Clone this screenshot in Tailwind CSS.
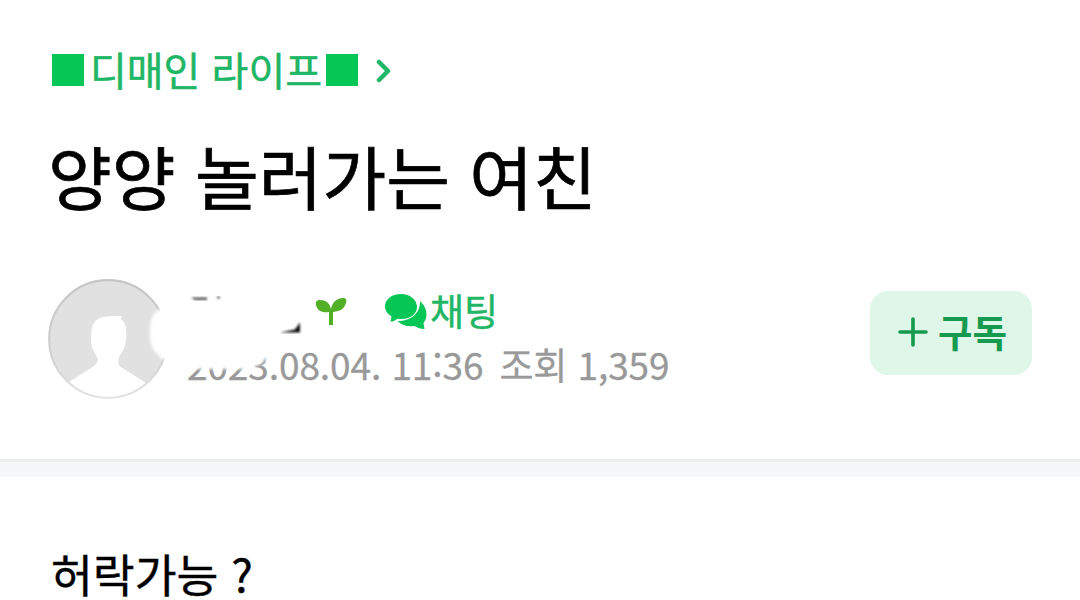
<!DOCTYPE html>
<html lang="ko">
<head>
  <meta charset="UTF-8" />
  <meta name="viewport" content="width=device-width, initial-scale=1.0"/>
  <title>양양 놀러가는 여친</title>
  <script src="https://cdn.jsdelivr.net/npm/@tailwindcss/browser@4"></script>
</head>
<body class="h-[600px] overflow-hidden bg-white font-['Noto_Sans_CJK_KR',sans-serif] text-black">
  <header class="h-[459px] px-12 pt-10">
    <!-- Board link -->
    <a class="flex h-[60px] items-center text-[40px] leading-none text-[#1fb665]">
      <span class="mr-[6px] ml-1 h-8 w-8 bg-[#06c755]"></span>
      <span class="-mt-0.5 whitespace-nowrap [-webkit-text-stroke:0.5px_#1fb665]">디매인 라이프</span>
      <span class="ml-[4px] h-8 w-8 bg-[#06c755]"></span>
      <svg class="mt-0.5 ml-[15px]" width="20" height="24" viewBox="0 0 20 24" fill="none" stroke="#1fb665" stroke-width="4.500" stroke-linecap="round" stroke-linejoin="round">
        <path d="M6 3l9 9-9 9"/>
      </svg>
    </a>

    <h1 class="mt-[25px] h-[105px] whitespace-nowrap text-[69.3px] leading-[100px] [-webkit-text-stroke:0.7px_#000]">양양 놀러가는 여친</h1>

    <!-- Author -->
    <div class="mt-[48px] flex">
      <svg width="122" height="122" viewBox="0 0 122 122">
        <defs>
          <clipPath id="face"><circle cx="60" cy="61" r="59"/></clipPath>
          <filter id="soft"><feGaussianBlur stdDeviation="1.5"/></filter>
          <linearGradient id="ring" x1="0" y1="0" x2="0" y2="1">
            <stop offset="0" stop-color="#c6c6c6"/>
            <stop offset="0.6" stop-color="#cfcfcf"/>
            <stop offset="1" stop-color="#e4e4e4"/>
          </linearGradient>
        </defs>
        <circle cx="60" cy="61" r="59" fill="#e1e1e1"/>
        <path clip-path="url(#face)" fill="#fff" d="M43 60c0-12 3-19 12-21 6-1 11-1 19-1l-1 3c5 4 6 11 5 21-1 9-4 12-7 17-2 8 1 10 5 12l22 14c4 3 6 6 6 15H18v-14l25-16c5-3 8-6 6-11-4-6-6-11-6-19z"/>
        <circle cx="60" cy="61" r="58.8" fill="none" stroke="url(#ring)" stroke-width="2.2"/>
        <path filter="url(#soft)" fill="#fff" d="M130 30h-16c-8 4-12 10-12 20-1 12 1 20 7 26l5 5 16 1z"/>
      </svg>

      <div class="relative ml-[18px]">
        <div class="flex h-[66px] items-center">
          <svg width="120" height="46" viewBox="0 0 120 46">
            <defs><filter id="smudge"><feGaussianBlur stdDeviation="0.9"/></filter></defs>
            <path filter="url(#smudge)" fill="#555" d="M3 9.500h16v2.500H7zM29 8.500h3v2h-3z"/>
            <path filter="url(#smudge)" fill="#111" d="M92 44.500l15-3 5-7v10z"/>
          </svg>
          <svg class="mt-1 ml-[7px]" width="34" height="32" viewBox="0 0 34 32" fill="#52b027">
            <path d="M1 8c-1-3 1-5 4-5 7 0 10 4 11 9 1-6 5-11 12-11 3 0 4 2 3 5-2 6-5 8-13 9v13h-4V15C7 16 2.500 14 1 8z"/>
          </svg>
          <svg class="ml-[35px]" width="46" height="38" viewBox="0 0 46 38" fill="#06c755">
            <path d="M36 9c4 4 6.500 8 6.500 13 0 4-1 6-3 9l1 6c-4 0-7-1-10-3-8 1-13-1-17-5 14 0 23-8 22.500-20z"/>
            <path d="M17 2C26.500 2 33 8 33 15S26.500 27 17.500 27c-1.500 0-3 0-4-.3C11 28.500 9 30 6.500 29.500L7.500 24.500C4 22 1 19 1 14.500 1 7.500 7.500 2 17 2z"/>
          </svg>
          <span class="-mt-0.5 whitespace-nowrap text-[37px] leading-none text-[#1fb665] [-webkit-text-stroke:0.5px_#1fb665]">채팅</span>
        </div>
        <div class="-mt-0.5 flex h-[44px] items-center gap-[16px] whitespace-nowrap text-[37px] leading-none tracking-[-0.1px] text-[#999] [-webkit-text-stroke:0.3px_#999]">
          <span class="-ml-px">2023.08.04. 11:36</span>
          <span>조회 1,359</span>
        </div>
        <!-- Hides part of the name and year -->
        <svg class="absolute -left-1 top-[60px]" width="110" height="45" viewBox="0 0 110 45">
          <path filter="url(#soft)" fill="#fff" d="M-4-4h96v13L78 25c-8 5-12 6-17 6H-4z"/>
        </svg>
      </div>

      <button class="mt-[13px] ml-auto flex h-[84px] w-[162px] items-center rounded-[18px] bg-[#dff7e9] pl-7 text-[37.5px] leading-none font-bold text-[#159a4f]">
        <svg class="-mt-0.5 mr-[10px]" width="30" height="30" viewBox="0 0 30 30" stroke="#159a4f" stroke-width="3.600" stroke-linecap="round">
          <path d="M2 15h26M15 2v26"/>
        </svg>
        <span class="-mt-1 whitespace-nowrap">구독</span>
      </button>
    </div>
  </header>

  <div class="h-[18px] border-t-[3px] border-[#eceeee] bg-[#f5f7f8]"></div>

  <p class="px-[51px] pt-[68px] text-[45.5px] leading-[55px] whitespace-nowrap [-webkit-text-stroke:0.4px_#000]"><span class="mt-px block">허락가능 ?</span></p>
</body>
</html>
